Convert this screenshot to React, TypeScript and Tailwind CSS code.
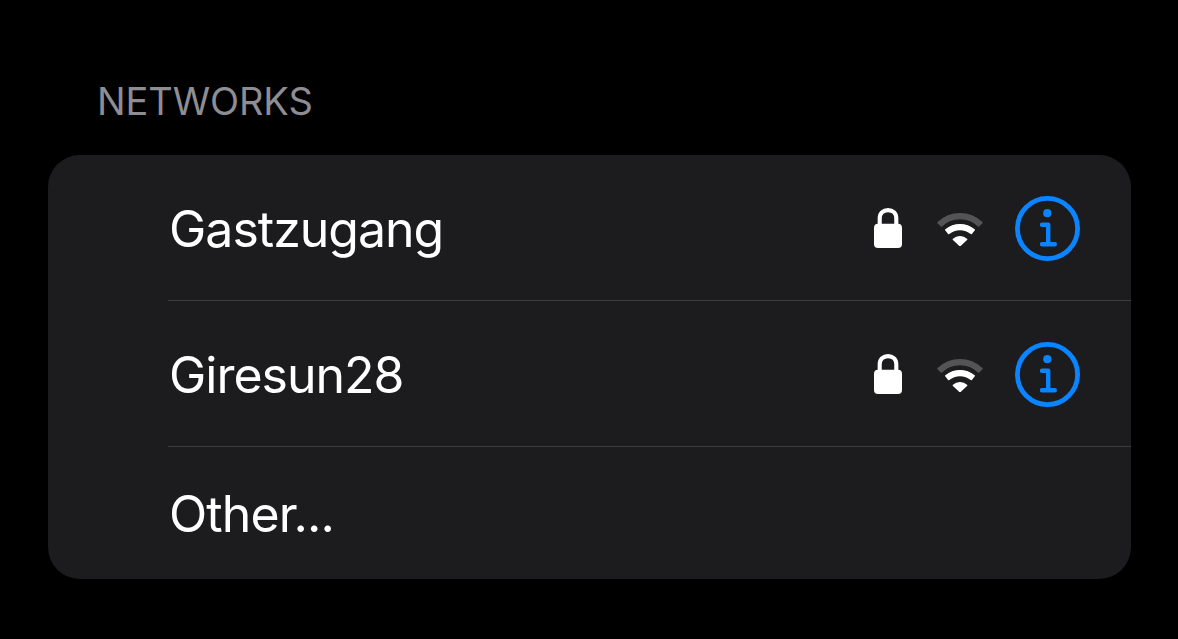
type Network = {
  ssid: string;
  locked: boolean;
};

const networks: Network[] = [
  { ssid: "Gastzugang", locked: true },
  { ssid: "Giresun28", locked: true },
];

function LockIcon() {
  return (
    <svg width="28" height="41" viewBox="0 0 28 41" fill="none">
      <path
        d="M5.7 18V10.2C5.7 5.2 9.2 2.1 14 2.1s8.3 3.1 8.3 8.1V18"
        stroke="white"
        strokeWidth="4.1"
      />
      <rect y="15.7" width="28" height="24.3" rx="4" fill="white" />
    </svg>
  );
}

function WifiIcon() {
  return (
    <svg
      width="46"
      height="35"
      viewBox="0 0 46 35"
      strokeWidth="1.6"
      strokeLinejoin="round"
    >
      <path
        d="M1.1 11.6A31.55 31.55 0 0 1 44.9 11.6L41.6 15A26.85 26.85 0 0 0 4.4 15Z"
        fill="#545456"
        stroke="#545456"
      />
      <path
        d="M8.8 18.8A22.55 22.55 0 0 1 37.2 18.8L34.25 22.4A17.85 17.85 0 0 0 11.75 22.4Z"
        fill="white"
        stroke="white"
      />
      <path
        d="M16.5 28.4C20 25 26 25 29.5 28.4L23.6 34Q23 34.4 22.4 34Z"
        fill="white"
        stroke="white"
      />
    </svg>
  );
}

function InfoIcon() {
  return (
    <svg width="65" height="65" viewBox="0 0 65 65" fill="none">
      <circle cx="32.5" cy="32.5" r="30.1" stroke="#0a84ff" strokeWidth="4.8" />
      <circle cx="32.3" cy="17.2" r="4.1" fill="#0a84ff" />
      <path
        d="M27 28.7H33.2V48.3M27 48.3H39.8"
        stroke="#0a84ff"
        strokeWidth="4.4"
        strokeLinecap="round"
        strokeLinejoin="round"
      />
    </svg>
  );
}

function NetworkRow({ network }: { network: Network }) {
  return (
    <li className="ml-[120px] flex h-[146px] items-center border-b border-[#3d3d40] pt-0.5 pr-[51px]">
      <span className="flex-1 pl-px text-[50px] leading-[60px] tracking-[-1px]">
        {network.ssid}
      </span>
      {network.locked && <LockIcon />}
      <span className="ml-[35px]">
        <WifiIcon />
      </span>
      <button type="button" aria-label="Info" className="ml-8">
        <InfoIcon />
      </button>
    </li>
  );
}

export default function App() {
  return (
    <main className="h-[639px] w-[1178px] overflow-hidden bg-black pt-[77px] pr-[47px] pl-12 font-['Inter',sans-serif] text-white">
      <h2 className="h-[78px] pl-[49px] text-[38px] leading-[48px] font-normal tracking-[-0.1px] text-[#8d8d93]">
        NETWORKS
      </h2>
      <ul className="h-[424px] overflow-hidden rounded-[32px] bg-[#1c1c1e]">
        {networks.map((network) => (
          <NetworkRow key={network.ssid} network={network} />
        ))}
        <li className="ml-[120px] flex h-[132px] items-center pt-0.5 pl-px text-[50px] leading-[60px] tracking-[-0.9px]">
          Other...
        </li>
      </ul>
    </main>
  );
}
